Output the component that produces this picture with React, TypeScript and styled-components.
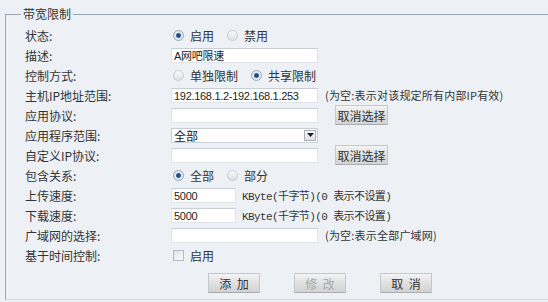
import React from 'react'
import styled, { createGlobalStyle } from 'styled-components'

const GlobalStyle = createGlobalStyle`
  html, body {
    margin: 0;
    padding: 0;
    background: #edf1f5;
    overflow: hidden;
  }
  body {
    font-family: "Noto Sans CJK SC", "Liberation Sans", sans-serif;
    font-size: 12px;
    color: #333;
  }
`

type Row = {
  label: string
  content: React.ReactNode
}

export default function App() {
  const rows: Row[] = [
    {
      label: '状态:',
      content: (
        <Choices>
          <RadioItem checked label="启用" />
          <RadioItem label="禁用" />
        </Choices>
      ),
    },
    { label: '描述:', content: <TextBox $w={147}>A网吧限速</TextBox> },
    {
      label: '控制方式:',
      content: (
        <Choices>
          <RadioItem label="单独限制" />
          <RadioItem checked label="共享限制" />
        </Choices>
      ),
    },
    {
      label: '主机IP地址范围:',
      content: (
        <>
          <TextBox $w={147}>192.168.1.2-192.168.1.253</TextBox>
          <Hint>(为空:表示对该规定所有内部IP有效)</Hint>
        </>
      ),
    },
    {
      label: '应用协议:',
      content: (
        <>
          <TextBox $w={147} />
          <SmallButton>取消选择</SmallButton>
        </>
      ),
    },
    {
      label: '应用程序范围:',
      content: (
        <Select>
          <span>全部</span>
          <SelectArrow>
            <svg width="7" height="4" viewBox="0 0 7 4">
              <path d="M0 0h7L3.5 4z" fill="#222" />
            </svg>
          </SelectArrow>
        </Select>
      ),
    },
    {
      label: '自定义IP协议:',
      content: (
        <>
          <TextBox $w={147} />
          <SmallButton>取消选择</SmallButton>
        </>
      ),
    },
    {
      label: '包含关系:',
      content: (
        <Choices>
          <RadioItem checked label="全部" />
          <RadioItem label="部分" />
        </Choices>
      ),
    },
    {
      label: '上传速度:',
      content: (
        <>
          <TextBox $w={65}>5000</TextBox>
          <UnitHint>KByte(千字节)(0 表示不设置)</UnitHint>
        </>
      ),
    },
    {
      label: '下载速度:',
      content: (
        <>
          <TextBox $w={65}>5000</TextBox>
          <UnitHint>KByte(千字节)(0 表示不设置)</UnitHint>
        </>
      ),
    },
    {
      label: '广域网的选择:',
      content: (
        <>
          <TextBox $w={147} />
          <Hint>(为空:表示全部广域网)</Hint>
        </>
      ),
    },
    {
      label: '基于时间控制:',
      content: (
        <Choices>
          <CheckItem>
            <CheckBox />
            启用
          </CheckItem>
        </Choices>
      ),
    },
  ]

  return (
    <>
      <GlobalStyle />
      <Panel>
        <Legend>带宽限制</Legend>
        <FormGrid>
          {rows.map((r, i) => (
            <React.Fragment key={i}>
              <Label>{r.label}</Label>
              <Value>{r.content}</Value>
            </React.Fragment>
          ))}
        </FormGrid>
        <Actions>
          <ActionButton>添&nbsp;&nbsp;加</ActionButton>
          <ActionButton disabled>修&nbsp;&nbsp;改</ActionButton>
          <ActionButton>取&nbsp;&nbsp;消</ActionButton>
        </Actions>
      </Panel>
    </>
  )
}

const RadioItem = (props: { label: string; checked?: boolean }) => (
  <ChoiceLabel>
    <RadioDot $checked={!!props.checked} />
    {props.label}
  </ChoiceLabel>
)

const Panel = styled.fieldset`
  margin: 6px 0 0 5px;
  padding: 0 0 0 19px;
  width: 543px;
  height: 294px;
  border: 1px solid #9aa5b1;
  border-right: none;
  border-bottom-color: #d4dae0;
  box-sizing: border-box;
  overflow: hidden;
`

const Legend = styled.legend`
  margin-left: -4px;
  padding: 0 2px;
  font-size: 12px;
  line-height: 16px;
  color: #333;
`

const FormGrid = styled.div`
  display: grid;
  grid-template-columns: 146px 1fr;
  grid-auto-rows: 20px;
  margin-top: 3px;
`

const Label = styled.div`
  display: flex;
  align-items: center;
  white-space: nowrap;
`

const Value = styled.div`
  display: flex;
  align-items: center;
  white-space: nowrap;
`

const Choices = styled.div`
  display: flex;
  align-items: center;
  gap: 13px;
  padding-left: 2px;
`

const ChoiceLabel = styled.span`
  display: inline-flex;
  align-items: center;
  gap: 6px;
`

const RadioDot = styled.span<{ $checked: boolean }>`
  width: 9px;
  height: 9px;
  border-radius: 50%;
  border: 1px solid ${(p) => (p.$checked ? '#9aa6b3' : '#c8ccd0')};
  background: ${(p) =>
    p.$checked
      ? 'radial-gradient(circle, #1f4f80 0 1.8px, #5d84ab 2.3px, #e2e9f0 2.9px)'
      : 'linear-gradient(#fafafa, #dcdfe2)'};
`

const CheckItem = styled.span`
  display: inline-flex;
  align-items: center;
  gap: 6px;
`

const CheckBox = styled.span`
  width: 9px;
  height: 9px;
  border: 1px solid #b8bcc0;
  background: linear-gradient(135deg, #e2e4e6, #fafafa);
`

const TextBox = styled.div<{ $w: number }>`
  width: ${(p) => p.$w}px;
  height: 15px;
  box-sizing: border-box;
  background: #fff;
  border: 1px solid #dfe3e8;
  border-top-color: #c8ced5;
  padding: 0 2px;
  font-family: "Liberation Sans", "Noto Sans CJK SC", sans-serif;
  font-size: 11px;
  letter-spacing: -0.3px;
  line-height: 14px;
  color: #222;
  overflow: hidden;
`

const Hint = styled.span`
  margin-left: 7px;
  font-size: 11px;
  letter-spacing: 0.2px;
  color: #333;
`

const UnitHint = styled.span`
  margin-left: 6px;
  font-family: "Liberation Mono", "Noto Sans CJK SC", monospace;
  font-size: 11px;
  letter-spacing: -0.6px;
  color: #333;
`

const buttonLook = `
  box-sizing: border-box;
  height: 20px;
  border: 1px solid #c6c9cc;
  border-bottom-color: #a9adb1;
  background: linear-gradient(#f4f4f4, #e2e2e2 45%, #d2d2d2);
  font-family: "Noto Sans CJK SC", sans-serif;
  font-size: 12px;
  color: #333;
  padding: 0;
  display: inline-flex;
  align-items: center;
  justify-content: center;
`

const SmallButton = styled.button`
  ${buttonLook}
  width: 53px;
  margin-left: 17px;
`

const Select = styled.div`
  width: 147px;
  height: 15px;
  box-sizing: border-box;
  background: #fff;
  border: 1px solid #c8ced5;
  display: flex;
  align-items: center;
  justify-content: space-between;
  padding-left: 2px;
  font-size: 12px;
  color: #222;
`

const SelectArrow = styled.span`
  width: 12px;
  height: 11px;
  margin-right: 1px;
  box-sizing: border-box;
  border: 1px solid #aab0b6;
  background: linear-gradient(#fbfbfb, #dcdfe2);
  display: flex;
  align-items: center;
  justify-content: center;
`

const Actions = styled.div`
  display: flex;
  gap: 34px;
  padding-left: 183px;
  margin-top: 8px;
`

const ActionButton = styled.button`
  ${buttonLook}
  width: 52px;
  &:disabled {
    color: #a8a8a8;
  }
`
